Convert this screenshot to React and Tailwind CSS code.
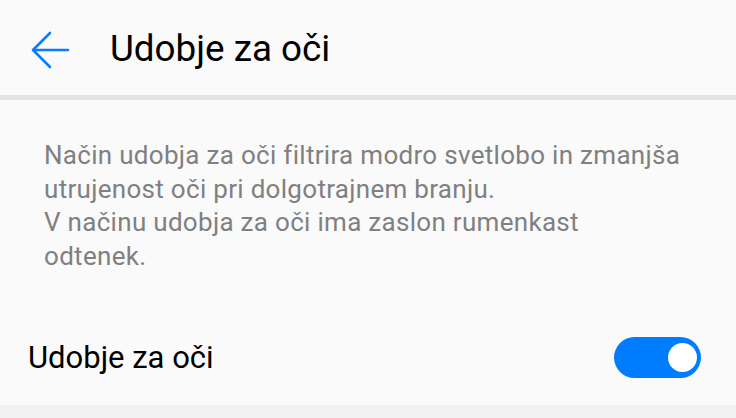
import React from "react";

function BackArrow() {
  return (
    <svg width="40" height="40" viewBox="0 0 40 40" fill="none">
      <path
        d="M3 20 H38 M3 20 L20 3 M3 20 L20 37"
        stroke="#0a7cff"
        strokeWidth="2.6"
        strokeLinecap="round"
        strokeLinejoin="round"
      />
    </svg>
  );
}

function Toggle({ on = true }) {
  return (
    <div
      className={`w-[87px] h-[41px] rounded-full flex items-center px-[4px] ${
        on ? "bg-[#007dff] justify-end" : "bg-[#cccccc] justify-start"
      }`}
    >
      <div className="w-[29px] h-[29px] rounded-full bg-white" />
    </div>
  );
}

export default function App() {
  return (
    <div
      className="w-[736px] h-[418px] bg-[#fafafa] flex flex-col overflow-hidden"
      style={{ fontFamily: "Roboto, 'Noto Sans', sans-serif" }}
    >
      {/* Header */}
      <div className="h-[95px] flex items-center pt-[4px] shrink-0">
        <div className="ml-[30px]">
          <BackArrow />
        </div>
        <h1 className="ml-[40px] text-[36.8px] leading-none text-black">
          Udobje za oči
        </h1>
      </div>
      <div className="h-[5px] bg-[#e3e3e3] shrink-0" />

      {/* Description */}
      <div className="pl-[44px] pr-[20px] pt-[39px] text-[26px] leading-[33.6px] tracking-[0.3px] text-[#808080] whitespace-nowrap">
        <p>
          Način udobja za oči filtrira modro svetlobo in zmanjša
          <br />
          utrujenost oči pri dolgotrajnem branju.
        </p>
        <p>
          V načinu udobja za oči ima zaslon rumenkast
          <br />
          odtenek.
        </p>
      </div>

      {/* Setting row */}
      <div className="mt-auto h-[96px] flex items-center justify-between pl-[28px] pr-[35px] shrink-0">
        <span className="text-[31px] text-black leading-none">Udobje za oči</span>
        <Toggle on />
      </div>
      <div className="h-[13px] bg-[#f2f2f2] shrink-0" />
    </div>
  );
}
